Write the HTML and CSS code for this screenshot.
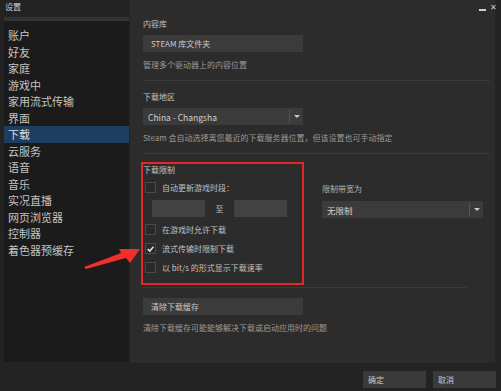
FILE: index.html
```html
<!DOCTYPE html>
<html lang="zh-CN">
<head>
    <meta charset="UTF-8">
    <title>设置</title>
    <link rel="stylesheet" href="styles.css">
</head>
<body>
    <div class="window">
        <div class="main">
            <div class="left">
                <div class="title">设置</div>
                <ul class="nav">
                    <li>账户</li>
                    <li>好友</li>
                    <li>家庭</li>
                    <li>游戏中</li>
                    <li>家用流式传输</li>
                    <li>界面</li>
                    <li class="active">下载</li>
                    <li>云服务</li>
                    <li>语音</li>
                    <li>音乐</li>
                    <li>实况直播</li>
                    <li>网页浏览器</li>
                    <li>控制器</li>
                    <li>着色器预缓存</li>
                </ul>
            </div>

            <div class="panel">
                <div class="label">内容库</div>
                <div class="btn wide">STEAM 库文件夹</div>
                <div class="desc">管理多个驱动器上的内容位置</div>
                <div class="divider"></div>

                <div class="label">下载地区</div>
                <div class="select wide">
                    <span>China - Changsha</span>
                    <span class="arrow"></span>
                </div>
                <div class="desc">Steam 会自动选择离您最近的下载服务器位置，但该设置也可手动指定</div>
                <div class="divider"></div>

                <div class="limits">
                    <div class="limit-box">
                        <div class="label">下载限制</div>
                        <div class="check first"><span class="box"></span>自动更新游戏时段：</div>
                        <div class="times">
                            <div class="field"></div>
                            <span class="to">至</span>
                            <div class="field"></div>
                        </div>
                        <div class="check"><span class="box"></span>在游戏时允许下载</div>
                        <div class="check"><span class="box checked">
                            <svg width="10" height="10" viewBox="0 0 10 10"><path d="M2 5.2 L4.2 7.4 L8.2 2.6" fill="none" stroke="#e6e6e6" stroke-width="1.8"/></svg>
                        </span>流式传输时限制下载</div>
                        <div class="check"><span class="box"></span>以 bit/s 的形式显示下载速率</div>
                    </div>
                    <div class="bandwidth">
                        <div class="label">限制带宽为</div>
                        <div class="select">
                            <span>无限制</span>
                            <span class="arrow"></span>
                        </div>
                    </div>
                </div>
                <div class="divider short"></div>

                <div class="btn wide cache">清除下载缓存</div>
                <div class="desc">清除下载缓存可能能够解决下载或启动应用时的问题</div>
            </div>
        </div>

        <div class="footer">
            <div class="btn small">确定</div>
            <div class="btn small">取消</div>
        </div>

        <div class="controls">
            <span class="min"></span>
            <span class="close">✕</span>
        </div>

        <svg class="pointer" width="70" height="30" viewBox="80 245 70 30">
            <polygon points="84,267 121,253 119,249 140,249 130,263 126,258 86,269" fill="#f0302c"/>
        </svg>
    </div>
</body>
</html>
```

FILE: styles.css
```css
* {
    box-sizing: border-box;
}

body {
    margin: 0;
    padding: 0;
    background: #232323;
    font-family: "Noto Sans CJK SC", "Noto Sans", sans-serif;
}

.window {
    position: relative;
    width: 501px;
    height: 391px;
    background: #232323;
    overflow: hidden;
}

.main {
    display: flex;
    height: 363px;
}

.left {
    width: 130px;
    display: flex;
    flex-direction: column;
}

.title {
    height: 17px;
    padding-left: 5px;
    font-size: 8px;
    line-height: 14px;
    color: #cfcfcf;
}

.nav {
    list-style: none;
    margin: 0 1px 1px 4px;
    padding: 6px 0 0;
    flex: 1;
    background: #1b1b1b;
    border-top: 4px solid #343434;
}

.nav li {
    height: 16.5px;
    line-height: 16.5px;
    padding-left: 4px;
    font-size: 11px;
    color: #c4c4c4;
}

.nav li.active {
    background: #1f3d5f;
    color: #dcdcdc;
}

.panel {
    width: 365px;
    padding: 18px 0 0 13px;
    background: #2c2c2c;
}

.label {
    font-size: 8px;
    line-height: 12px;
    color: #c2c2c2;
}

.desc {
    margin-top: 7px;
    font-size: 8px;
    line-height: 12px;
    color: #9a9a9a;
    white-space: nowrap;
}

.btn {
    height: 17px;
    line-height: 17px;
    padding-left: 8px;
    font-size: 8px;
    color: #c8c8c8;
    background: #3b3b3b;
}

.wide {
    width: 160px;
    margin-top: 5px;
}

.divider {
    margin-top: 9px;
    height: 1px;
    width: 347px;
    background: #3a3a3a;
}

.select {
    display: flex;
    justify-content: space-between;
    align-items: center;
    height: 17px;
    padding-left: 5px;
    font-size: 8.5px;
    color: #d0d0d0;
    background: #3b3b3b;
}

.select + .desc {
    margin-top: 7px;
}

.label + .select {
    margin-top: 5px;
}

.arrow {
    position: relative;
    width: 14px;
    height: 13px;
    border-left: 1px solid #555;
}

.arrow::after {
    content: "";
    position: absolute;
    left: 4px;
    top: 5px;
    border-left: 3px solid transparent;
    border-right: 3px solid transparent;
    border-top: 3px solid #c8c8c8;
}

.divider + .label {
    margin-top: 10px;
}

.limits {
    display: flex;
    margin-top: 8px;
    margin-left: -2px;
}

.limit-box {
    width: 163px;
    height: 123px;
    border: 2px solid #e8262a;
    padding-left: 0;
}

.check {
    display: flex;
    align-items: center;
    height: 19px;
    padding-left: 2px;
    font-size: 8px;
    color: #c0c0c0;
}

.check.first {
    margin-top: 2px;
}

.box {
    display: flex;
    align-items: center;
    justify-content: center;
    width: 11px;
    height: 11px;
    margin-right: 6px;
    background: #2a2a2a;
    border: 1px solid #4a4a4a;
}

.times {
    display: flex;
    align-items: center;
    height: 17px;
    margin: 3px 0 3px 9px;
}

.field {
    width: 53px;
    height: 17px;
    background: #424242;
}

.to {
    width: 29px;
    text-align: center;
    font-size: 8px;
    color: #c0c0c0;
}

.bandwidth {
    margin-left: 18px;
    margin-top: 21px;
    width: 161px;
}

.bandwidth .label {
    color: #b4b4b4;
}

.bandwidth .select {
    margin-top: 6px;
}

.divider.short {
    margin-top: 2px;
    width: 324px;
}

.cache {
    margin-top: 10px;
}

.footer {
    display: flex;
    justify-content: flex-end;
    gap: 7px;
    padding: 8px 5px 0 0;
}

.btn.small {
    width: 63px;
    height: 17px;
    padding-left: 5px;
    background: #3a3a3a;
}

.controls {
    position: absolute;
    top: 1px;
    right: 4px;
    display: flex;
    align-items: center;
    gap: 4px;
    color: #d0d0d0;
    font-size: 8px;
}

.min {
    width: 7px;
    height: 2px;
    margin-top: 6px;
    background: #cfcfcf;
}

.pointer {
    position: absolute;
    left: 80px;
    top: 245px;
}
```
